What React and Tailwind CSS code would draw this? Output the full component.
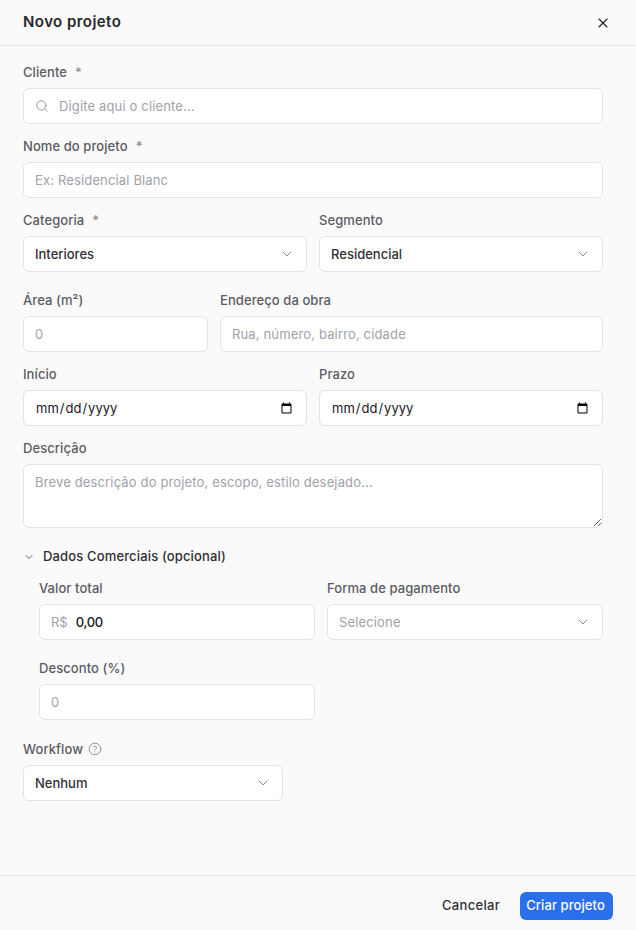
import { ChevronDown, CircleHelp, Search, X } from 'lucide-react';

const inputClass =
  'h-9 w-full rounded-md border border-[#e4e4e7] bg-white px-[11px] text-[13px] text-[#18181b] outline-none placeholder:text-[#a1a1aa] placeholder:tracking-[0.15px]';

// Label with optional required mark
const Label = ({ children, required }) => (
  <label className="mb-2 flex h-4 items-center text-[13px] font-medium leading-4 tracking-[0.08px] text-[#5c5c64]">
    {children}
    {required && <span className="ml-2 text-[#8b8b93]">*</span>}
  </label>
);

const SelectBox = ({ value, muted }) => (
  <button
    type="button"
    className="flex h-9 w-full items-center justify-between rounded-md border border-[#e4e4e7] bg-white pl-[11px] pr-[11px] text-[13px] font-medium"
  >
    <span className={muted ? 'pt-px font-normal tracking-[0.15px] text-[#a1a1aa]' : 'pt-px text-[#2f2f35]'}>{value}</span>
    <ChevronDown size={16} strokeWidth={1.5} className="text-[#8b8b93]" />
  </button>
);

const App = () => {
  return (
    <div className="flex h-screen flex-col bg-[#fafafa] font-['Inter',sans-serif]">
      {/* Header */}
      <header className="flex h-[46px] shrink-0 items-center justify-between border-b border-[#e4e4e7] pl-[23px] pr-[25px]">
        <h1 className="text-[15px] font-semibold tracking-[0.45px] text-[#27272a]">Novo projeto</h1>
        <X size={16} strokeWidth={1.75} className="text-[#27272a]" />
      </header>

      {/* Form */}
      <form className="flex flex-1 flex-col gap-3.5 pl-[23px] pr-[33px] pt-[18px]">
        <div>
          <Label required>Cliente</Label>
          <div className="relative">
            <Search size={14} strokeWidth={1.5} className="absolute left-3 top-[11px] text-[#8b8b93]" />
            <input className={`${inputClass} pl-[35px]`} placeholder="Digite aqui o cliente..." />
          </div>
        </div>

        <div>
          <Label required>Nome do projeto</Label>
          <input className={inputClass} placeholder="Ex: Residencial Blanc" />
        </div>

        <div className="mb-1.5 grid grid-cols-2 gap-3">
          <div>
            <Label required>Categoria</Label>
            <SelectBox value="Interiores" />
          </div>
          <div>
            <Label>Segmento</Label>
            <SelectBox value="Residencial" />
          </div>
        </div>

        <div className="grid grid-cols-[185px_1fr] gap-3">
          <div>
            <Label>Área (m²)</Label>
            <input className={inputClass} placeholder="0" />
          </div>
          <div>
            <Label>Endereço da obra</Label>
            <input className={inputClass} placeholder="Rua, número, bairro, cidade" />
          </div>
        </div>

        <div className="grid grid-cols-2 gap-3">
          <div>
            <Label>Início</Label>
            <input type="date" className={`${inputClass} pt-px`} />
          </div>
          <div>
            <Label>Prazo</Label>
            <input type="date" className={`${inputClass} pt-px`} />
          </div>
        </div>

        <div>
          <Label>Descrição</Label>
          <textarea
            className="block h-16 w-full rounded-md border border-[#e4e4e7] bg-white px-[11px] py-2 text-[13px] text-[#18181b] outline-none placeholder:text-[#a1a1aa] placeholder:tracking-[0.15px]"
            placeholder="Breve descrição do projeto, escopo, estilo desejado..."
          />
        </div>

        {/* Dados comerciais */}
        <div>
          <button type="button" className="mt-[5px] flex h-[18px] items-center gap-2 pt-px text-[13px] font-medium tracking-[0.15px] text-[#2f2f35]">
            <ChevronDown size={12} strokeWidth={1.5} />
            Dados Comerciais (opcional)
          </button>
          <div className="mt-[15px] grid grid-cols-2 gap-x-3 gap-y-5 pl-4">
            <div>
              <Label>Valor total</Label>
              <div className="flex h-9 items-center rounded-md border border-[#e4e4e7] bg-white px-[11px] pt-px text-[13px]">
                <span className="mr-2 text-[#a1a1aa]">R$</span>
                <span className="font-medium tracking-[-0.3px] text-[#18181b]">0,00</span>
              </div>
            </div>
            <div>
              <Label>Forma de pagamento</Label>
              <SelectBox value="Selecione" muted />
            </div>
            <div>
              <Label>Desconto (%)</Label>
              <input className={inputClass} placeholder="0" />
            </div>
          </div>
        </div>

        <div className="mt-[7px] w-[260px]">
          <Label>
            Workflow
            <CircleHelp size={14} strokeWidth={1.25} className="ml-[5px] text-[#71717a]" />
          </Label>
          <SelectBox value="Nenhum" />
        </div>
      </form>

      {/* Footer */}
      <footer className="flex h-[55px] shrink-0 items-start justify-end gap-2 border-t border-[#e4e4e7] pr-[23px] pt-4">
        <button type="button" className="h-7 px-3 text-[13px] font-medium tracking-[0.3px] text-[#2f2f35]">Cancelar</button>
        <button type="button" className="h-7 w-[93px] rounded-md bg-[#2a6fed] pr-0.5 text-[13px] font-medium tracking-[0.08px] text-white">Criar projeto</button>
      </footer>
    </div>
  );
};

export default App;
